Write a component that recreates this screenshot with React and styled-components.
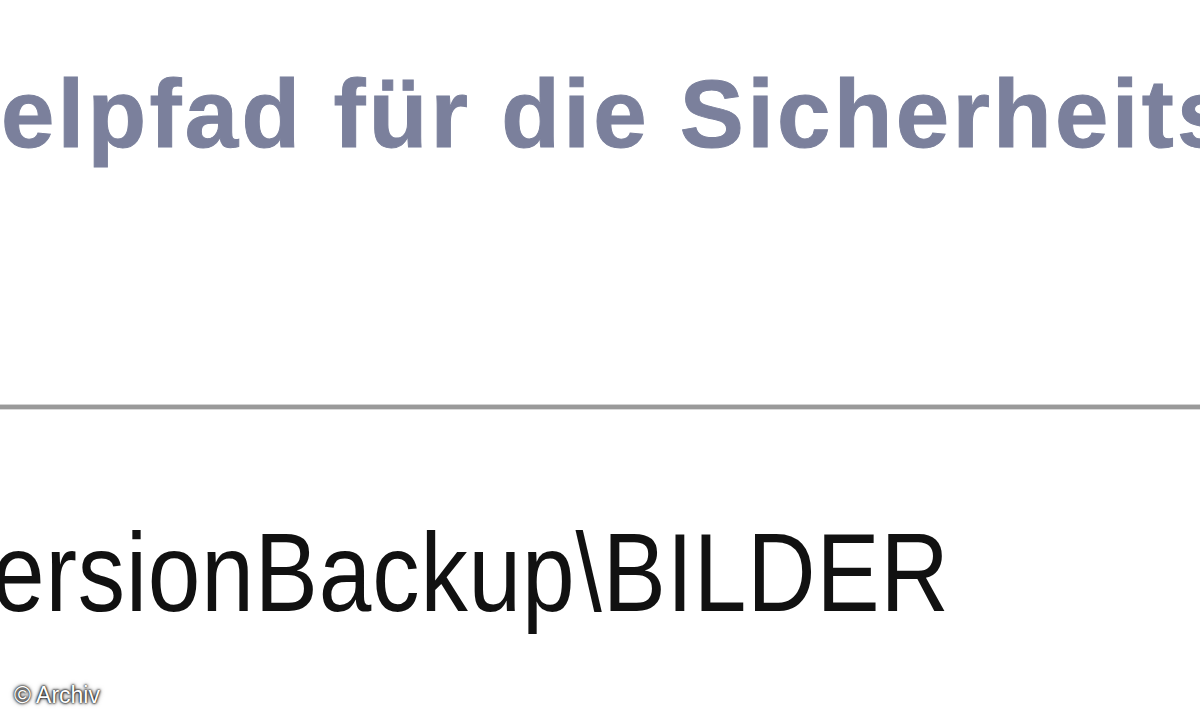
import React from "react";
import styled, { createGlobalStyle } from "styled-components";

const Global = createGlobalStyle`
  html, body { margin: 0; padding: 0; background: #ffffff; }
  body { font-family: "Liberation Sans", Arial, sans-serif; }
`;

const Page = styled.div`
  position: relative;
  width: 1200px;
  height: 720px;
  overflow: hidden;
  background: #ffffff;
  display: flex;
  flex-direction: column;
`;

const Heading = styled.div`
  padding-top: 66px;
  height: 96px;
  white-space: nowrap;
  font-family: "Liberation Sans", Arial, sans-serif;
  font-weight: 700;
  font-size: 96px;
  line-height: 96px;
  letter-spacing: 3.3px;
  color: #7b809c;
  -webkit-text-stroke: 1px #7b809c;
`;

const Cropped = styled.span`
  display: inline-block;
  margin-left: ${(p) => p.$shift}px;
`;

const Rule = styled.div`
  margin-top: 243px;
  height: 4px;
  flex: none;
  background: #9a9a9a;
  box-shadow: 0 -1px 0 #d2d2d2, 0 1px 0 #dadada;
`;

const PathText = styled.div`
  margin-top: 108px;
  white-space: nowrap;
  font-family: "Liberation Sans", Arial, sans-serif;
  font-weight: 400;
  font-size: 112px;
  line-height: 112px;
  letter-spacing: 1px;
  color: #111111;
  transform: scaleX(0.845);
  transform-origin: left center;
`;

const Credit = styled.div`
  position: absolute;
  left: 14px;
  bottom: 11px;
  font-family: "Liberation Sans", Arial, sans-serif;
  font-size: 23px;
  color: #ffffff;
  text-shadow: 0 0 2px #000, 0 0 3px #000, 0 0 5px rgba(0,0,0,0.6);
`;

export default function App() {
  return (
    <>
      <Global />
      <Page>
        <Heading>
          <Cropped $shift={-91}>Zielpfad für die Sicherheitskopie</Cropped>
        </Heading>
        <Rule />
        <PathText>
          <Cropped $shift={-79}>VersionBackup\BILDER</Cropped>
        </PathText>
        <Credit>© Archiv</Credit>
      </Page>
    </>
  );
}
